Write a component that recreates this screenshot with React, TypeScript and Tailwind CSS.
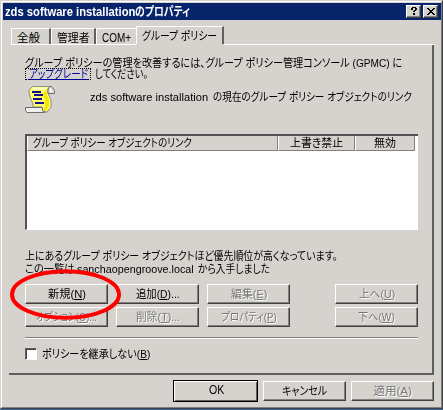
import { useLayoutEffect, useRef, useState } from 'react';
import type { ReactNode } from 'react';
import { clsx } from 'clsx';

interface LabelProps {
  width: number;
  children: ReactNode;
  className?: string;
}

// Single line of text condensed to a given width, like the narrow UI Gothic faces
function Label({ width, children, className }: LabelProps) {
  const ref = useRef<HTMLSpanElement>(null);
  const [scale, setScale] = useState(1);

  useLayoutEffect(() => {
    if (ref.current) {
      setScale(width / ref.current.offsetWidth);
    }
  }, [width]);

  return (
    <span className={clsx('inline-flex h-3 shrink-0 items-center', className)} style={{ width }}>
      <span
        ref={ref}
        className="inline-block origin-left whitespace-pre leading-3"
        style={{ transform: `scaleX(${scale})` }}
      >
        {children}
      </span>
    </span>
  );
}

interface ButtonProps {
  text: string;
  accessKey?: string;
  dots?: boolean;
  width: number;
  disabled?: boolean;
  isDefault?: boolean;
  className?: string;
}

function Button({ text, accessKey, dots, width, disabled, isDefault, className }: ButtonProps) {
  return (
    <button
      disabled={disabled}
      className={clsx(
        'flex w-[83px] shrink-0 items-center justify-center border-t border-l border-t-white border-l-white',
        isDefault
          ? 'shadow-[inset_-1px_-1px_#606060] outline outline-black'
          : 'border-r border-b border-r-[#404040] border-b-[#404040] shadow-[inset_-1px_-1px_#808080]',
        disabled && 'text-[#777] [text-shadow:1px_1px_#fff]',
        className ?? 'h-5'
      )}
    >
      <Label width={width}>
        {text}
        {accessKey && (
          <>
            (<span className="underline underline-offset-1">{accessKey}</span>)
          </>
        )}
        {dots && '...'}
      </Label>
    </button>
  );
}

function ScrollIcon() {
  return (
    <svg className="h-[29px] w-[31px] shrink-0" viewBox="0 0 31 29">
      <path
        d="M7.5 1.5H25L23 4v4l3 7v7l-4 5h-7l2-5H8v-3L5.5 13 4 8V5z"
        fill="#ffff6b"
        stroke="#8c8c8c"
      />
      <path d="M8 2.5h13v2H6.5z" fill="#ffffce" />
      <path d="M21 4l1 6 2 5v6l-3 5h-3l2-5v-6l-2-6z" fill="#f7e700" />
      <path d="M23 8.5V4l2-2.5h1.500l3 4v3z" fill="#dedede" stroke="#6b6b6b" />
      <path d="M25 3.500h1.500V7H25z" fill="#fff" />
      <path d="M.5 22.500h17v3l2 2H2l-1.500-2z" fill="#efefef" stroke="#6b6b6b" />
      <path d="M17 25.500h2l3 2h-4z" fill="#8c8c8c" />
      <path
        d="M7 6h9v2H7zM9 9h9v2H9zM8 13h9v2H8zM10 17h9v2h-9z"
        fill="#10108c"
        shapeRendering="crispEdges"
      />
    </svg>
  );
}

const columns = [
  { title: 'グループ ポリシー オブジェクトのリンク', textWidth: 159, className: 'w-[251px] pl-[5px]' },
  { title: '上書き禁止', textWidth: 53, className: 'w-[77px] justify-center' },
  { title: '無効', textWidth: 22, className: 'w-[60px] justify-center' },
];

function TitleBar() {
  return (
    <div className="flex h-[17px] shrink-0 items-center bg-[#08246b] pr-[3px] pl-0.5 text-white">
      <Label width={130} className="text-[12px] font-bold">
        zds software installation
      </Label>
      <Label width={55} className="text-[12px] font-bold">
        のプロパティ
      </Label>
      <div className="ml-auto flex gap-[2px]">
        <div className="flex h-[13px] w-[15px] items-center justify-center border border-white border-r-[#404040] border-b-[#404040] bg-[#d6d3ce] shadow-[inset_-1px_-1px_#808080]">
          <svg className="h-[9px] w-2" viewBox="0 0 8 9" shapeRendering="crispEdges">
            <path d="M2 0h4v1h1v2H6v1H5v1H3V4h1V3h1V1H3v2H1V1h1zM3 6h2v2H3z" fill="#000" />
          </svg>
        </div>
        <div className="flex h-[13px] w-[15px] items-center justify-center border border-white border-r-[#404040] border-b-[#404040] bg-[#d6d3ce] shadow-[inset_-1px_-1px_#808080]">
          <svg className="h-[7px] w-2" viewBox="0 0 8 7" shapeRendering="crispEdges">
            <path
              d="M0 0h2v1h1v1h2V1h1V0h2v1H7v1H6v1H5v1h1v1h1v1h1v1H6V6H5V5H3v1H2v1H0V6h1V5h1V4h1V3H2V2H1V1H0z"
              fill="#000"
            />
          </svg>
        </div>
      </div>
    </div>
  );
}

function Tabs() {
  const tab = 'flex h-4 items-center border-t border-l border-white pt-0.5 pl-[5px]';
  const edge = 'border-r-2 border-r-[#606060]';

  return (
    <div className="flex h-[18px] shrink-0 items-end pl-0.5">
      <div className={clsx(tab, edge, 'w-10')}>
        <Label width={23}>全般</Label>
      </div>
      <div className={clsx(tab, edge, 'w-[45px]')}>
        <Label width={33}>管理者</Label>
      </div>
      <div className={clsx(tab, 'w-10')}>
        <Label width={29} className="text-[13px]">
          COM+
        </Label>
      </div>
      <div className="flex h-[18px] w-[88px] items-center border-t border-r-2 border-l border-white border-r-[#606060] pl-[5px]">
        <Label width={75}>グループ ポリシー</Label>
      </div>
    </div>
  );
}

function LinkList() {
  return (
    <div className="mt-5 flex h-[96px] w-[393px] shrink-0 flex-col border-t-2 border-b border-l-2 border-t-[#525052] border-b-white border-l-[#525052] bg-white">
      <div className="flex h-[15px]">
        {columns.map((column) => (
          <div
            key={column.title}
            className={clsx(
              'flex items-center border-r border-b border-l border-r-[#808080] border-b-[#808080] border-l-white bg-[#d6d3ce]',
              column.className
            )}
          >
            <Label width={column.textWidth}>{column.title}</Label>
          </div>
        ))}
      </div>
    </div>
  );
}

export default function App() {
  return (
    <div className="relative h-[410px] w-[443px] overflow-hidden bg-[#316aa5] font-['Liberation_Sans','Noto_Sans_CJK_JP',sans-serif] text-[11.5px] text-black [font-feature-settings:'palt']">
      <div className="flex h-[409px] flex-col border-t border-r border-b border-l border-[#d6d3ce] border-r-[#404040] border-b-[#404040] bg-[#d6d3ce]">
        <div className="flex h-full flex-col border border-white border-r-[#808080] border-b-[#808080] pt-px pl-px">
          <TitleBar />

          <div className="flex flex-col pt-1.5 pl-1.5">
            <Tabs />

            {/* Active page */}
            <div className="flex">
              <div className="ml-0.5 h-px w-[125px] bg-white" />
              <div className="ml-[88px] h-px w-[210px] bg-white" />
            </div>
            <div className="flex h-[330px] w-[425px] flex-col border-r-2 border-b-2 border-[#606060] pt-3 pl-4">
              <Label width={377}>
                グループ ポリシーの管理を改善するには、グループ ポリシー管理コンソール (GPMC) に
              </Label>
              <div className="-mt-px flex h-3 items-center">
                <a className="flex h-3 w-[66px] items-center justify-center border border-dotted border-black text-[#0000a0]">
                  <Label width={59} className="underline underline-offset-1">
                    アップグレード
                  </Label>
                </a>
                <Label width={53} className="ml-1">
                  してください。
                </Label>
              </div>
              <div className="mt-[5px] flex h-[29px] items-center">
                <ScrollIcon />
                <Label width={118} className="mt-[-6px] ml-[34px]">
                  zds software installation
                </Label>
                <Label width={199} className="mt-[-5px] ml-[5px]">
                  の現在のグループ ポリシー オブジェクトのリンク
                </Label>
              </div>

              <LinkList />

              <Label width={313} className="mt-5">
                上にあるグループ ポリシー オブジェクトほど優先順位が高くなっています。
              </Label>
              <div className="mt-px flex">
                <Label width={50}>この一覧は</Label>
                <Label width={117} className="ml-[2px]">
                  sanchaopengroove.local
                </Label>
                <Label width={72} className="ml-1">
                  から入手しました
                </Label>
              </div>

              <div className="mt-[9px] flex gap-2">
                <Button text="新規" accessKey="N" width={38} />
                <Button text="追加" accessKey="D" dots width={44} />
                <Button text="編集" accessKey="E" width={36} disabled />
                <div className="ml-[37px]">
                  <Button text="上へ" accessKey="U" width={36} disabled />
                </div>
              </div>
              <div className="mt-[3px] flex gap-2">
                <Button text="オプション" accessKey="O" dots width={61} disabled />
                <Button text="削除" accessKey="T" dots width={44} disabled />
                <Button text="プロパティ" accessKey="P" width={56} disabled />
                <div className="ml-[37px]">
                  <Button text="下へ" accessKey="W" width={37} disabled />
                </div>
              </div>

              <div className="mt-2.5 h-0.5 w-[393px] border-t border-b border-t-[#808080] border-b-white" />

              <label className="mt-[9px] flex h-3 items-center gap-[5px]">
                <span className="h-[12px] w-[12px] border border-[#606060] border-r-white border-b-white bg-white shadow-[inset_1px_1px_#404040]" />
                <Label width={108}>
                  ポリシーを継承しない(<span className="underline underline-offset-1">B</span>)
                </Label>
              </label>
            </div>

            <div className="mt-1.5 flex pl-[165px]">
              <Button text="OK" width={15} isDefault className="h-5 pb-[3px] text-[12px]" />
              <Button text="キャンセル" width={45} className="ml-[6px] h-5" />
              <Button text="適用" accessKey="A" width={38} disabled className="ml-[5px] h-5" />
            </div>
          </div>
        </div>
      </div>

      {/* Highlight around the "new" button */}
      <svg className="pointer-events-none absolute top-[266px] left-[7px] h-[56px] w-[117px]" viewBox="0 0 117 56">
        <ellipse cx="58.5" cy="28.5" rx="53.5" ry="23.3" fill="none" stroke="#ff0000" strokeWidth="4" />
      </svg>
    </div>
  );
}
